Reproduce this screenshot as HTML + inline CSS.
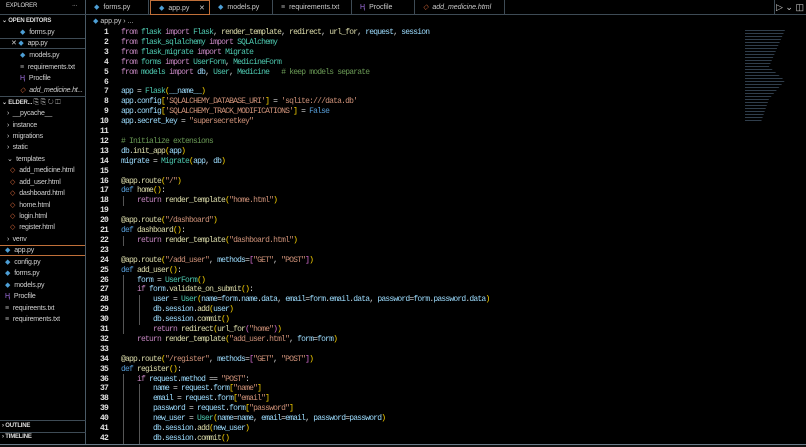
<!DOCTYPE html>
<html><head><meta charset="utf-8"><style>
*{margin:0;padding:0;box-sizing:border-box}
body{width:806px;height:447px;background:#000;overflow:hidden;position:relative;font-family:"Liberation Sans",sans-serif;color:#ccc}
.side{position:absolute;left:0;top:0;width:86px;height:444px;border-right:1px solid #4a5a66}
.row{position:absolute;left:0;height:11px;font-size:7px;line-height:11px;white-space:nowrap;color:#d0d0d0;letter-spacing:-0.2px}
.hdr{font-weight:bold;font-size:6px;color:#ddd}
.tabs{position:absolute;left:86px;top:0;width:720px;height:15px;border-bottom:1px solid #3e4b55}
.tab{position:absolute;top:0;height:15px;font-size:7px;line-height:15px;color:#ccc;border-right:1px solid #3e4b55;padding-left:8px;white-space:nowrap}
.ic{display:inline-block;margin-right:4px}
.py{color:#4d9fd6}
.ht{color:#e06c3c}
.pf{color:#a070e0}
.tx{color:#aaa}
.code{position:absolute;left:86px;top:28px;font-family:"Liberation Mono",monospace;font-size:8px;letter-spacing:-0.8px;color:#d4d4d4}
.ln{position:absolute;left:0;width:22px;text-align:right;color:#e0e0e0;font-weight:bold;height:9.9px;line-height:9.9px}
.cl{position:absolute;left:35px;white-space:pre;height:9.9px;line-height:9.9px}
.k{color:#c586c0}.b{color:#569cd6}.f{color:#dcdcaa}.c{color:#4ec9b0}.s{color:#ce9178}.v{color:#9cdcfe}.m{color:#6a9955}.y{color:#ffd700}.p{color:#da70d6}
.guide{position:absolute;width:1px;background:#555}
</style></head><body>
<div class="side">
<div class="row hdr" style="top:1px;left:6px;font-weight:normal">EXPLORER<span style="position:absolute;left:66px">···</span></div>
<div style="position:absolute;left:0;top:14px;width:86px;height:1px;background:#3e4b55"></div>
<div class="row hdr" style="top:16px;left:2px">⌄ OPEN EDITORS</div>
<div class="row" style="top:27px;left:20px"><span class="ic py">◆</span>forms.py</div>
<div class="row" style="top:38px;left:0;width:85px;border-top:1px solid #3e4b55;border-bottom:1px solid #3e4b55;padding-left:11px;line-height:10px">✕ <span class="ic py">◆</span>app.py</div>
<div class="row" style="top:50px;left:20px"><span class="ic py">◆</span>models.py</div>
<div class="row" style="top:62px;left:20px"><span class="ic tx">≡</span>requirements.txt</div>
<div class="row" style="top:73px;left:20px"><span class="ic pf">Ⱨ</span>Procfile</div>
<div class="row" style="top:85px;left:20px;font-style:italic"><span class="ic ht">◇</span>add_medicine.ht...</div>
<div style="position:absolute;left:0;top:96px;width:86px;height:1px;background:#3e4b55"></div>
<div class="row hdr" style="top:97px;left:2px">⌄ ELDER... <span style="font-weight:normal;color:#bbb;font-size:7px">⎘ ⎘ ↻ ◫</span></div>
<div class="row" style="top:108px;left:7px">›&nbsp; __pycache__</div>
<div class="row" style="top:120px;left:7px">›&nbsp; instance</div>
<div class="row" style="top:131px;left:7px">›&nbsp; migrations</div>
<div class="row" style="top:142px;left:7px">›&nbsp; static</div>
<div class="row" style="top:154px;left:7px">⌄&nbsp; templates</div>
<div class="row" style="top:165px;left:10px"><span class="ic ht">◇</span>add_medicine.html</div>
<div class="row" style="top:177px;left:10px"><span class="ic ht">◇</span>add_user.html</div>
<div class="row" style="top:188px;left:10px"><span class="ic ht">◇</span>dashboard.html</div>
<div class="row" style="top:200px;left:10px"><span class="ic ht">◇</span>home.html</div>
<div class="row" style="top:211px;left:10px"><span class="ic ht">◇</span>login.html</div>
<div class="row" style="top:222px;left:10px"><span class="ic ht">◇</span>register.html</div>
<div class="row" style="top:234px;left:7px">›&nbsp; venv</div>
<div class="row" style="top:245px;left:0;width:85px;border-top:1px solid #c0703a;border-bottom:1px solid #c0703a;padding-left:5px;line-height:10px"><span class="ic py">◆</span>app.py</div>
<div class="row" style="top:257px;left:5px"><span class="ic py">◆</span>config.py</div>
<div class="row" style="top:268px;left:5px"><span class="ic py">◆</span>forms.py</div>
<div class="row" style="top:280px;left:5px"><span class="ic py">◆</span>models.py</div>
<div class="row" style="top:291px;left:5px"><span class="ic pf">Ⱨ</span>Procfile</div>
<div class="row" style="top:303px;left:5px"><span class="ic tx">≡</span>requireents.txt</div>
<div class="row" style="top:314px;left:5px"><span class="ic tx">≡</span>requirements.txt</div>
<div style="position:absolute;left:0;top:420px;width:86px;height:1px;background:#3e4b55"></div>
<div class="row hdr" style="top:421px;left:2px">› OUTLINE</div>
<div style="position:absolute;left:0;top:432px;width:86px;height:1px;background:#3e4b55"></div>
<div class="row hdr" style="top:432px;left:2px">› TIMELINE</div>
</div>
<div class="tabs">
<div class="tab" style="left:0;width:63px"><span class="ic py">◆</span>forms.py</div>
<div class="tab" style="left:64px;width:60px;border:1px solid #c0703a;height:15px"><span class="ic py">◆</span>app.py<span style="position:absolute;left:48px">✕</span></div>
<div class="tab" style="left:124px;width:63px"><span class="ic py">◆</span>models.py</div>
<div class="tab" style="left:187px;width:79px"><span class="ic tx">≡</span>requirements.txt</div>
<div class="tab" style="left:266px;width:63px"><span class="ic pf">Ⱨ</span>Procfile</div>
<div class="tab" style="left:329px;width:90px;font-style:italic"><span class="ic ht">◇</span>add_medicine.html</div>
<div style="position:absolute;left:688px;top:0;width:1px;height:15px;background:#3e4b55"></div>
<div style="position:absolute;left:690px;top:0;font-size:9px;line-height:15px;color:#ccc">▷ ⌄ ◫</div>
</div>
<div style="position:absolute;left:93px;top:17px;font-size:7px;line-height:10px;color:#ccc"><span class="py">◆</span> app.py › ...</div>
<div style="position:absolute;left:745px;top:30px;width:40px;height:92px;opacity:.45;background:repeating-linear-gradient(180deg,#6a8aa8 0 1px,transparent 1px 3px);clip-path:polygon(0 0,100% 0,80% 20%,60% 40%,100% 55%,60% 75%,40% 100%,0 100%)"></div>
<div class="code">
<div class="guide" style="left:37px;top:168px;height:10px"></div>
<div class="guide" style="left:37px;top:208px;height:10px"></div>
<div class="guide" style="left:37px;top:247px;height:59px"></div>
<div class="guide" style="left:53px;top:267px;height:30px"></div>
<div class="guide" style="left:37px;top:346px;height:70px"></div>
<div class="guide" style="left:53px;top:356px;height:60px"></div>
<div id="lines"></div>
</div>
<div style="position:absolute;left:0;top:444px;width:806px;height:3px;background:#111;border-top:1px solid #6a7a88"></div>
<script>
const L=[
'<span class="k">from</span> <span class="c">flask</span> <span class="k">import</span> <span class="c">Flask</span>, <span class="f">render_template</span>, <span class="f">redirect</span>, <span class="f">url_for</span>, <span class="v">request</span>, <span class="v">session</span>',
'<span class="k">from</span> <span class="c">flask_sqlalchemy</span> <span class="k">import</span> <span class="c">SQLAlchemy</span>',
'<span class="k">from</span> <span class="c">flask_migrate</span> <span class="k">import</span> <span class="c">Migrate</span>',
'<span class="k">from</span> <span class="c">forms</span> <span class="k">import</span> <span class="c">UserForm</span>, <span class="c">MedicineForm</span>',
'<span class="k">from</span> <span class="c">models</span> <span class="k">import</span> <span class="v">db</span>, <span class="c">User</span>, <span class="c">Medicine</span>   <span class="m"># keep models separate</span>',
'',
'<span class="v">app</span> = <span class="c">Flask</span><span class="y">(</span><span class="v">__name__</span><span class="y">)</span>',
'<span class="v">app</span>.<span class="v">config</span><span class="y">[</span><span class="s">\'SQLALCHEMY_DATABASE_URI\'</span><span class="y">]</span> = <span class="s">\'sqlite:///data.db\'</span>',
'<span class="v">app</span>.<span class="v">config</span><span class="y">[</span><span class="s">\'SQLALCHEMY_TRACK_MODIFICATIONS\'</span><span class="y">]</span> = <span class="b">False</span>',
'<span class="v">app</span>.<span class="v">secret_key</span> = <span class="s">"supersecretkey"</span>',
'',
'<span class="m"># Initialize extensions</span>',
'<span class="v">db</span>.<span class="f">init_app</span><span class="y">(</span><span class="v">app</span><span class="y">)</span>',
'<span class="v">migrate</span> = <span class="c">Migrate</span><span class="y">(</span><span class="v">app</span>, <span class="v">db</span><span class="y">)</span>',
'',
'<span class="f">@app.route</span><span class="y">(</span><span class="s">"/"</span><span class="y">)</span>',
'<span class="b">def</span> <span class="f">home</span><span class="y">()</span>:',
'    <span class="k">return</span> <span class="f">render_template</span><span class="y">(</span><span class="s">"home.html"</span><span class="y">)</span>',
'',
'<span class="f">@app.route</span><span class="y">(</span><span class="s">"/dashboard"</span><span class="y">)</span>',
'<span class="b">def</span> <span class="f">dashboard</span><span class="y">()</span>:',
'    <span class="k">return</span> <span class="f">render_template</span><span class="y">(</span><span class="s">"dashboard.html"</span><span class="y">)</span>',
'',
'<span class="f">@app.route</span><span class="y">(</span><span class="s">"/add_user"</span>, <span class="v">methods</span>=<span class="p">[</span><span class="s">"GET"</span>, <span class="s">"POST"</span><span class="p">]</span><span class="y">)</span>',
'<span class="b">def</span> <span class="f">add_user</span><span class="y">()</span>:',
'    <span class="v">form</span> = <span class="c">UserForm</span><span class="y">()</span>',
'    <span class="k">if</span> <span class="v">form</span>.<span class="f">validate_on_submit</span><span class="y">()</span>:',
'        <span class="v">user</span> = <span class="c">User</span><span class="y">(</span><span class="v">name</span>=<span class="v">form</span>.<span class="v">name</span>.<span class="v">data</span>, <span class="v">email</span>=<span class="v">form</span>.<span class="v">email</span>.<span class="v">data</span>, <span class="v">password</span>=<span class="v">form</span>.<span class="v">password</span>.<span class="v">data</span><span class="y">)</span>',
'        <span class="v">db</span>.<span class="v">session</span>.<span class="f">add</span><span class="y">(</span><span class="v">user</span><span class="y">)</span>',
'        <span class="v">db</span>.<span class="v">session</span>.<span class="f">commit</span><span class="y">()</span>',
'        <span class="k">return</span> <span class="f">redirect</span><span class="y">(</span><span class="f">url_for</span><span class="p">(</span><span class="s">"home"</span><span class="p">)</span><span class="y">)</span>',
'    <span class="k">return</span> <span class="f">render_template</span><span class="y">(</span><span class="s">"add_user.html"</span>, <span class="v">form</span>=<span class="v">form</span><span class="y">)</span>',
'',
'<span class="f">@app.route</span><span class="y">(</span><span class="s">"/register"</span>, <span class="v">methods</span>=<span class="p">[</span><span class="s">"GET"</span>, <span class="s">"POST"</span><span class="p">]</span><span class="y">)</span>',
'<span class="b">def</span> <span class="f">register</span><span class="y">()</span>:',
'    <span class="k">if</span> <span class="v">request</span>.<span class="v">method</span> == <span class="s">"POST"</span>:',
'        <span class="v">name</span> = <span class="v">request</span>.<span class="v">form</span><span class="y">[</span><span class="s">"name"</span><span class="y">]</span>',
'        <span class="v">email</span> = <span class="v">request</span>.<span class="v">form</span><span class="y">[</span><span class="s">"email"</span><span class="y">]</span>',
'        <span class="v">password</span> = <span class="v">request</span>.<span class="v">form</span><span class="y">[</span><span class="s">"password"</span><span class="y">]</span>',
'        <span class="v">new_user</span> = <span class="c">User</span><span class="y">(</span><span class="v">name</span>=<span class="v">name</span>, <span class="v">email</span>=<span class="v">email</span>, <span class="v">password</span>=<span class="v">password</span><span class="y">)</span>',
'        <span class="v">db</span>.<span class="v">session</span>.<span class="f">add</span><span class="y">(</span><span class="v">new_user</span><span class="y">)</span>',
'        <span class="v">db</span>.<span class="v">session</span>.<span class="f">commit</span><span class="y">()</span>'];
let h='';L.forEach((l,i)=>{const t=(i*9.9).toFixed(1);h+='<div class="ln" style="top:'+t+'px">'+(i+1)+'</div><div class="cl" style="top:'+t+'px">'+l+'</div>';});
document.getElementById('lines').innerHTML=h;
</script>
</body></html>
